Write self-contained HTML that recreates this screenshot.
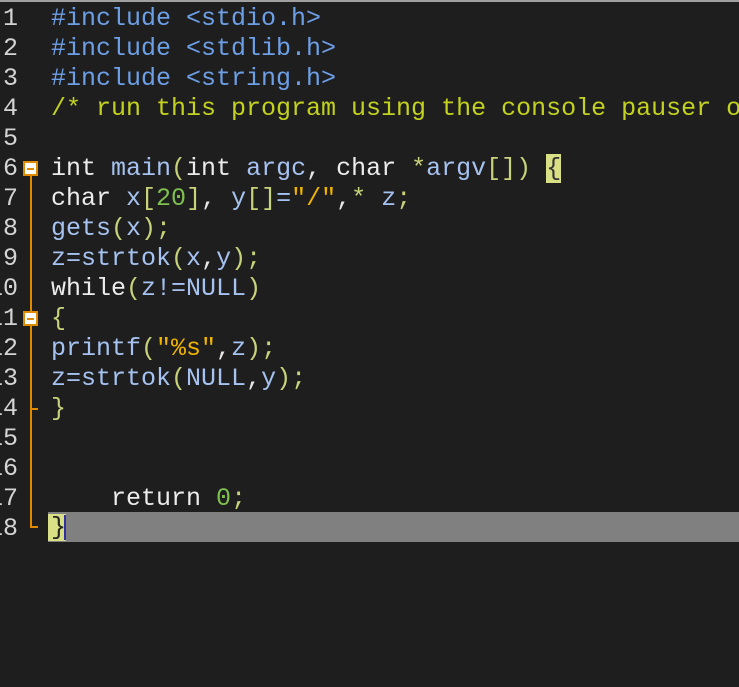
<!DOCTYPE html>
<html><head><style>
body{margin:0;width:739px;height:687px;background:#1e1e1e;overflow:hidden;position:relative;font-family:"Liberation Mono",monospace;font-size:25px}
.top{position:absolute;left:0;top:0;width:739px;height:2px;background:#a0a0a0}
.ln{position:absolute;right:721px;color:#d4d4d4;white-space:pre;line-height:30px}
.c{position:absolute;left:51px;white-space:pre;line-height:30px;color:#a6c2f0}
.inc{color:#6d9fe6}.cm{color:#c3d21e}.k{color:#ececec}.p{color:#c8d27a}.s{color:#f0b400}.n{color:#7fc050}.w{color:#e6e6e6}
.hl{position:absolute;left:48px;top:512px;width:691px;height:30px;background:#808080}
.fold{position:absolute;background:#e08a00}
.box{position:absolute;width:11px;height:11px;border:2px solid #e08a00;background:#fff}
.box:after{content:"";position:absolute;left:2px;top:5px;width:7px;height:2px;background:#e08a00}
</style></head><body>
<div class="top"></div>
<div class="hl"></div>
<div class="fold" style="left:30px;top:170px;width:2px;height:358px"></div>
<div class="fold" style="left:30px;top:408px;width:8px;height:2px"></div>
<div class="fold" style="left:30px;top:526px;width:8px;height:2px"></div>
<div class="box" style="left:23px;top:161px"></div>
<div class="box" style="left:23px;top:311px"></div>
<div style="position:absolute;left:48px;top:514px;width:18px;height:27px;background:#d8df84"></div>
<div style="position:absolute;left:64px;top:515px;width:2px;height:25px;background:#3030a0"></div>
<div class="ln" style="top:4px">1</div>
<div class="ln" style="top:34px">2</div>
<div class="ln" style="top:64px">3</div>
<div class="ln" style="top:94px">4</div>
<div class="ln" style="top:124px">5</div>
<div class="ln" style="top:154px">6</div>
<div class="ln" style="top:184px">7</div>
<div class="ln" style="top:214px">8</div>
<div class="ln" style="top:244px">9</div>
<div class="ln" style="top:274px">10</div>
<div class="ln" style="top:304px">11</div>
<div class="ln" style="top:334px">12</div>
<div class="ln" style="top:364px">13</div>
<div class="ln" style="top:394px">14</div>
<div class="ln" style="top:424px">15</div>
<div class="ln" style="top:454px">16</div>
<div class="ln" style="top:484px">17</div>
<div class="ln" style="top:514px">18</div>
<div class="c inc" style="top:4px">#include &lt;stdio.h&gt;</div>
<div class="c inc" style="top:34px">#include &lt;stdlib.h&gt;</div>
<div class="c inc" style="top:64px">#include &lt;string.h&gt;</div>
<div class="c cm" style="top:94px;width:688px;overflow:hidden">/* run this program using the console pauser or</div>
<div class="c" style="top:154px"><span class="k">int</span> main<span class="p">(</span><span class="k">int</span> argc<span class="w">,</span> <span class="k">char</span> <span class="p">*</span>argv<span class="p">[])</span> <span class="p" style="background:#d8df84;color:#333">{</span></div>
<div class="c" style="top:184px"><span class="k">char</span> x<span class="p">[</span><span class="n">20</span><span class="p">]</span><span class="w">,</span> y<span class="p">[]</span>=<span class="s">"/"</span><span class="w">,</span><span class="p">*</span> z<span class="p">;</span></div>
<div class="c" style="top:214px">gets<span class="p">(</span>x<span class="p">);</span></div>
<div class="c" style="top:244px">z=strtok<span class="p">(</span>x<span class="w">,</span>y<span class="p">);</span></div>
<div class="c" style="top:274px"><span class="k">while</span><span class="p">(</span>z!=NULL<span class="p">)</span></div>
<div class="c p" style="top:304px">{</div>
<div class="c" style="top:334px">printf<span class="p">(</span><span class="s">"%s"</span><span class="w">,</span>z<span class="p">);</span></div>
<div class="c" style="top:364px">z=strtok<span class="p">(</span>NULL<span class="w">,</span>y<span class="p">);</span></div>
<div class="c p" style="top:394px">}</div>
<div class="c" style="top:484px">    <span class="k">return</span> <span class="n">0</span><span class="p">;</span></div>
<div class="c" style="top:513px;color:#222">}</div>
</body></html>
